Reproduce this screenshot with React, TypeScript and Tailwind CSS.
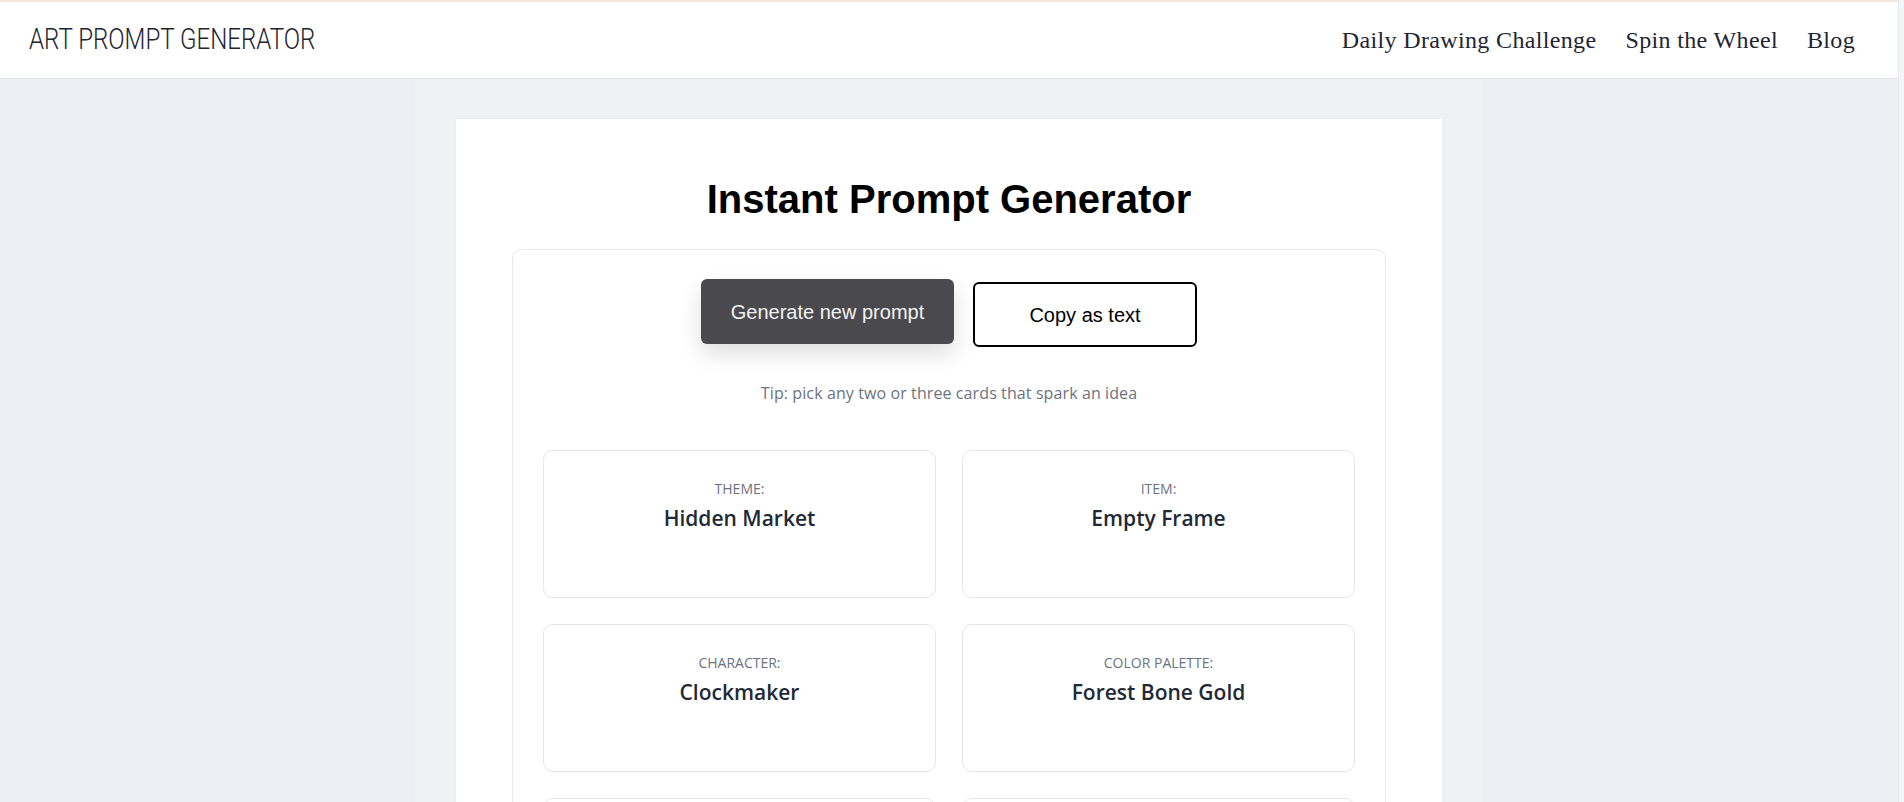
import React from "react";

const cards = [
  { label: "Theme:", value: "Hidden Market" },
  { label: "Item:", value: "Empty Frame" },
  { label: "Character:", value: "Clockmaker" },
  { label: "Color Palette:", value: "Forest Bone Gold" },
  { label: "Setting:", value: "Abandoned Lighthouse" },
  { label: "Mood:", value: "Quiet Wonder" },
];

export default function App() {
  return (
    <div className="flex h-[802px] w-full overflow-hidden bg-[#ecf0f4]">
      <div className="flex w-[1898px] shrink-0 flex-col">
        <header className="flex h-[79px] shrink-0 items-center justify-between border-t-2 border-b border-t-[#f6e7da] border-b-[#dde3ea] bg-white pl-[29px] pr-[43px]">
          <div className="w-[300px] overflow-visible">
            <span
              className="inline-block origin-left scale-x-[0.83] whitespace-nowrap text-[29px] font-light leading-none text-[#1e2430]"
              style={{ fontFamily: "Roboto, 'Liberation Sans', sans-serif" }}
            >
              ART PROMPT GENERATOR
            </span>
          </div>
          <nav
            className="flex items-center gap-[29px] text-[24px] tracking-[0.35px] text-[#1f2433]"
            style={{ fontFamily: "'Liberation Serif', serif" }}
          >
            <a href="#">Daily Drawing Challenge</a>
            <a href="#">Spin the Wheel</a>
            <a href="#">Blog</a>
          </nav>
        </header>
        <main className="flex flex-1 justify-center">
          <div className="flex w-[1068px] justify-center bg-[#eef2f5]">
            <div className="mt-[40px] h-fit w-[986px] bg-white px-[56px] pt-[57px] pb-10 shadow-[0_0_4px_rgba(0,0,0,0.04)]">
              <h1
                className="text-center text-[40px] font-bold leading-[46px] text-black"
                style={{ fontFamily: "'Liberation Sans', Arial, sans-serif" }}
              >
                Instant Prompt Generator
              </h1>
              <div className="mt-[27px] rounded-[10px] border border-[#e7eaee] px-[30px] pt-[32px] pb-8">
                <div
                  className="flex justify-center gap-[19px]"
                  style={{ fontFamily: "'Liberation Sans', Arial, sans-serif" }}
                >
                  <button className="h-[65px] w-[253px] -translate-y-[3px] rounded-[6px] bg-[#4a4a4e] text-[20px] text-[#f2f2f2] shadow-[0_10px_22px_rgba(0,0,0,0.13)]">
                    Generate new prompt
                  </button>
                  <button className="h-[65px] w-[224px] rounded-[6px] border-2 border-black bg-white text-[20px] text-black">
                    Copy as text
                  </button>
                </div>
                <p
                  className="mt-[34px] text-center text-[16px] leading-[24px] tracking-[0.1px] text-[#6b7280]"
                  style={{ fontFamily: "'Open Sans', sans-serif" }}
                >
                  Tip: pick any two or three cards that spark an idea
                </p>
                <div
                  className="mt-[45px] grid grid-cols-2 gap-[26px]"
                  style={{ fontFamily: "'Open Sans', sans-serif" }}
                >
                  {cards.map((c) => (
                    <div
                      key={c.label}
                      className="h-[148px] rounded-[10px] border border-[#e5e7eb] pt-[27px] text-center"
                    >
                      <div className="text-[14px] uppercase leading-[21px] text-[#6b7280]">
                        {c.label}
                      </div>
                      <div className="mt-[3px] text-[21px] font-semibold leading-[33px] text-[#1f2937]">
                        {c.value}
                      </div>
                    </div>
                  ))}
                </div>
              </div>
            </div>
          </div>
        </main>
      </div>
      <div className="w-[6px] shrink-0 border-l border-[#e6e9ed] bg-[#f3f5f7]" />
    </div>
  );
}
